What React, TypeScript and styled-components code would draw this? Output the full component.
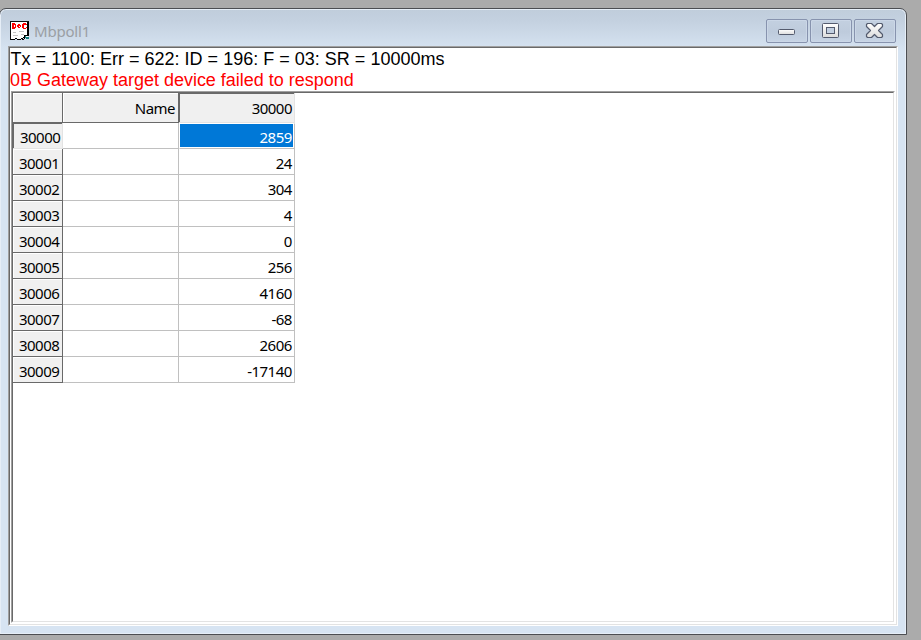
import React from "react";
import styled, { createGlobalStyle, css } from "styled-components";

const GlobalStyle = createGlobalStyle`
  * { box-sizing: border-box; }
  html, body { margin: 0; height: 100%; overflow: hidden; background: #ababab; }
`;

const Desktop = styled.div`
  width: 921px;
  height: 640px;
  padding-top: 8px;
  background: #ababab;
  overflow: hidden;
`;

const Window = styled.section`
  display: flex;
  flex-direction: column;
  width: 908px;
  height: 627px;
  margin-left: -1px;
  padding: 0 8px 8px;
  border: 1px solid #4c4e52;
  border-radius: 7px 7px 0 0;
  background: linear-gradient(#c0cddb 0, #c4d1e0 12px, #d7e4f2 42px, #d7e4f2 100%);
  box-shadow: inset 0 0 0 1px #e6eef7;
`;

const TitleBar = styled.header`
  display: flex;
  flex: none;
  height: 37px;
  padding: 10px 2px 0 2px;
`;

const Title = styled.h1`
  flex: 1;
  margin: 0;
  padding: 2px 0 0 4px;
  font: 400 15px/20px "Noto Sans", "Open Sans", sans-serif;
  letter-spacing: -0.2px;
  color: #9b9fa4;
`;

const DocIcon = styled.svg`
  flex: none;
  width: 20px;
  height: 20px;
  margin-top: 2px;
`;

const Controls = styled.div`
  display: flex;
  gap: 2px;
`;

const ControlButton = styled.button`
  display: block;
  width: 42px;
  height: 24px;
  padding: 0;
  border: 1px solid #8793ae;
  border-radius: 2px;
  background: linear-gradient(#c3d0e0, #becbdc 55%, #c7d4e5);
  box-shadow: inset 0 0 0 1px #cbd7e7;
  svg { display: block; }
`;

const Client = styled.main`
  display: flex;
  flex: 1;
  flex-direction: column;
  border: 1px solid;
  border-color: #a0a0a0 #fff #fff #a0a0a0;
  background: #fff;
`;

const ClientInner = styled.div`
  display: flex;
  flex: 1;
  flex-direction: column;
  padding: 0 1px 1px;
  border: 1px solid;
  border-color: #696969 #e3e3e3 #e3e3e3 #696969;
`;

const Status = styled.div`
  flex: none;
  height: 43px;
  margin-left: -1px;
  padding-top: 1px;
  font: 18px/21px "Liberation Sans", Arial, sans-serif;
  white-space: nowrap;
`;

const StatusLine = styled.div<{ $error?: boolean }>`
  padding-left: ${(p) => (p.$error ? 0 : 0.6)}px;
  color: ${(p) => (p.$error ? "#f00" : "#000")};
  letter-spacing: ${(p) => (p.$error ? -0.01 : 0.01)}px;
`;

const GridFrame = styled.div`
  display: flex;
  flex: 1;
  border: 1px solid;
  border-color: #a0a0a0 #fff #fff #a0a0a0;
`;

const GridInner = styled.div`
  flex: 1;
  border: 1px solid;
  border-color: #696969 #e3e3e3 #e3e3e3 #696969;
`;

const Table = styled.div`
  display: grid;
  grid-template-columns: 50px 116px 116px;
  grid-template-rows: 30px;
  grid-auto-rows: 26px;
  width: 282px;
  font: 15px/26px "Noto Sans", "Open Sans", sans-serif;
  letter-spacing: -0.52px;
  text-align: right;
  color: #000;
`;

const raised = css`
  border-right: 1px solid #696969;
  border-bottom: 1px solid #696969;
  box-shadow: inset 1px 1px #fff;
`;

const sunken = css`
  border-right: 1px solid #e3e3e3;
  border-bottom: 1px solid #e3e3e3;
  box-shadow: inset 1px 1px #696969;
`;

const ColumnHeader = styled.div<{ $active?: boolean }>`
  padding: 2px ${(p) => (p.$active ? 2 : 3)}px 0 0;
  background: #f0f0f0;
  ${(p) => (p.$active ? sunken : raised)}
`;

const RowHeader = styled.div<{ $active?: boolean }>`
  padding: 1px ${(p) => (p.$active ? 1.7 : 2.7)}px 0 0;
  background: #f0f0f0;
  ${(p) => (p.$active ? sunken : raised)}
`;

const Cell = styled.div<{ $selected?: boolean }>`
  padding: 1px 2.2px 0 0;
  border-right: 1px solid #c0c0c0;
  border-bottom: 1px solid #c0c0c0;
  ${(p) =>
    p.$selected &&
    css`
      line-height: 24px;
      border-top: 1px solid #fff;
      border-left: 1px solid #fff;
      background: #0078d7;
      color: #fff;
      box-shadow: inset 0 -1px #fff, inset -1px 0 #fff;
    `}
`;

const rows: [number, number][] = [
  [30000, 2859],
  [30001, 24],
  [30002, 304],
  [30003, 4],
  [30004, 0],
  [30005, 256],
  [30006, 4160],
  [30007, -68],
  [30008, 2606],
  [30009, -17140],
];

const GlyphDefs = () => (
  <defs>
    <linearGradient id="face" x1="0" y1="0" x2="0" y2="1">
      <stop offset="0" stopColor="#fff" />
      <stop offset="1" stopColor="#dcdcdc" />
    </linearGradient>
  </defs>
);

const Minimize = () => (
  <svg width="40" height="22" viewBox="0 0 40 22">
    <GlyphDefs />
    <rect x="11.5" y="9.5" width="16" height="5" rx="1" fill="url(#face)" stroke="#545b6e" />
  </svg>
);

const Restore = () => (
  <svg width="40" height="22" viewBox="0 0 40 22">
    <rect x="11.5" y="3.5" width="16" height="14" rx="1" fill="url(#face)" stroke="#545b6e" />
    <rect x="15.5" y="7.5" width="8" height="6" fill="#c2cfe0" stroke="#545b6e" />
  </svg>
);

const Close = () => (
  <svg width="40" height="22" viewBox="0 0 40 22">
    <path
      d="M12.5 3.5H16.5L19.5 6.5L22.5 3.5H26.5L27.5 4.5V6.5L23.5 10.5L27.5 14.5V16.5L26.5 17.5H22.5L19.5 14.5L16.5 17.5H12.5L11.5 16.5V14.5L15.5 10.5L11.5 6.5V4.5Z"
      fill="url(#face)"
      stroke="#545b6e"
      strokeWidth="1.2"
      strokeLinejoin="round"
    />
  </svg>
);

const DocumentGlyph = () => (
  <DocIcon viewBox="0 0 20 20" shapeRendering="crispEdges">
    <path d="M1 1h17v13h-3v3h-2v1h-3v1H7v-1H5v1H1z" fill="#fff" />
    <path d="M0 0h19v1H1v18H0z" fill="#111" />
    <path d="M17 1h2v14h-4v-1h2zM1 18h4v1H1zM5 17h2v1H5zM7 18h4v1H7zM11 17h2v1h-2zM13 16h1v1h-1zM14 14h1v4h-1zM12 18h2v1h-2z" fill="#000" />
    <path d="M15 15h1v1h3v2h-3z" fill="#188080" />
    <path d="M16 15h2v1h-2z" fill="#fff" />
    <path d="M2 2h3v1h1v4H5v1H2zM4 4v2h1V4zM8 3h2v1h1v2h-1v1H8V6H7V4h1zM8.5 4.500v1h1v-1zM13 2h3v2h-2v3h2v1h-3V7h-1V3h1zM16 3h1v1h-1zM16 6h1v1h-1z" fill="#f00" fillRule="evenodd" />
    <path d="M3 11h3v1H3zM9 10h5v1H9zM3 14h5v1H3zM11 13h3v1h-3z" fill="#c4c4c4" />
  </DocIcon>
);

export default function App() {
  return (
    <>
      <GlobalStyle />
      <Desktop>
        <Window>
          <TitleBar>
            <DocumentGlyph />
            <Title>Mbpoll1</Title>
            <Controls>
              <ControlButton aria-label="Minimize"><Minimize /></ControlButton>
              <ControlButton aria-label="Restore"><Restore /></ControlButton>
              <ControlButton aria-label="Close"><Close /></ControlButton>
            </Controls>
          </TitleBar>
          <Client>
            <ClientInner>
              <Status>
                <StatusLine>Tx = 1100: Err = 622: ID = 196: F = 03: SR = 10000ms</StatusLine>
                <StatusLine $error>0B Gateway target device failed to respond</StatusLine>
              </Status>
              <GridFrame>
                <GridInner>
                  <Table>
                    <ColumnHeader />
                    <ColumnHeader>Name</ColumnHeader>
                    <ColumnHeader $active>30000</ColumnHeader>
                    {rows.map(([address, value], i) => (
                      <React.Fragment key={address}>
                        <RowHeader $active={i === 0}>{address}</RowHeader>
                        <Cell />
                        <Cell $selected={i === 0}>{value}</Cell>
                      </React.Fragment>
                    ))}
                  </Table>
                </GridInner>
              </GridFrame>
            </ClientInner>
          </Client>
        </Window>
      </Desktop>
    </>
  );
}
